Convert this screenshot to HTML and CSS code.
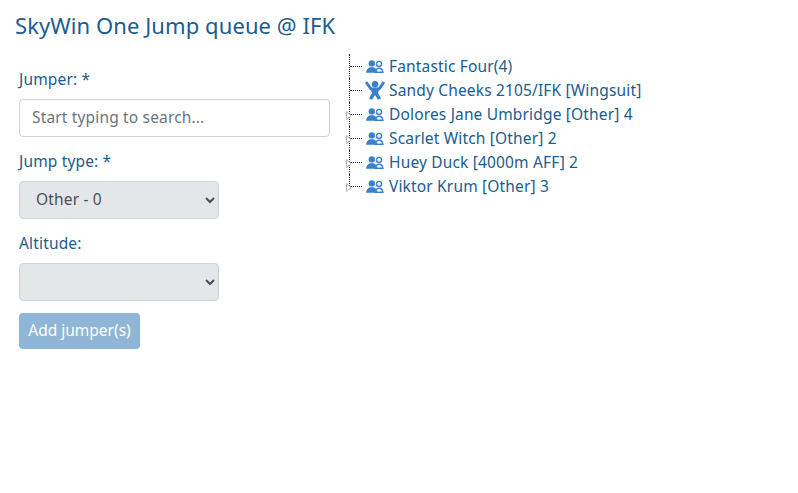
FILE: index.html
```html
<!DOCTYPE html>
<html lang="en">
<head>
<meta charset="utf-8">
<title>SkyWin One Jump queue</title>
<link rel="stylesheet" href="styles.css">
</head>
<body>
<svg class="defs" width="0" height="0" aria-hidden="true">
  <symbol id="group" viewBox="0 0 18 13">
    <circle cx="13" cy="3.900" r="2.500" fill="#fff" stroke="#3a80cc" stroke-width="1.400"/>
    <path d="M9.500 12.200c.3-2.600 1.500-3.900 3.500-3.900s3.500 1.300 3.900 3.900z" fill="#fff" stroke="#3a80cc" stroke-width="1.400"/>
    <circle cx="5.800" cy="3.400" r="3.200" fill="#3a80cc"/>
    <path d="M0 12.800c.2-3.600 2.600-5.600 5.800-5.600s5.300 2 5.600 5.600z" fill="#3a80cc"/>
  </symbol>
  <symbol id="solo" viewBox="0 0 20 20">
    <circle cx="10" cy="4.300" r="3.200" fill="#3a80cc"/>
    <path d="M1 2 5.800 8.800H14.200L19 2" fill="none" stroke="#3a80cc" stroke-width="2.800"/>
    <path d="M5.500 8H14.500L13 13 16 18.500 13 19.800 10 15 7 19.800 4 18.500 7 13z" fill="#3a80cc"/>
  </symbol>
  <symbol id="arrow" viewBox="0 0 6 9">
    <path d="M.5.500 5.300 4.500.5 8.500z" fill="#fff" stroke="#b4b4b4"/>
  </symbol>
</svg>
<h1 class="title">SkyWin One Jump queue @ IFK</h1>
<main class="layout">
  <form class="queue-form">
    <div class="field">
      <label class="label" for="jumper">Jumper: *</label>
      <input class="control" id="jumper" type="text" placeholder="Start typing to search...">
    </div>
    <div class="field">
      <label class="label" for="type">Jump type: *</label>
      <select class="picker" id="type"><option>Other - 0</option></select>
    </div>
    <div class="field">
      <label class="label" for="alt">Altitude:</label>
      <select class="picker" id="alt"><option></option></select>
    </div>
    <button class="submit" type="button" disabled>Add jumper(s)</button>
  </form>
  <ul class="tree">
    <li class="node"><svg class="icon"><use href="#group"/></svg>Fantastic Four(4)</li>
    <li class="node"><svg class="icon icon-solo"><use href="#solo"/></svg>Sandy Cheeks 2105/IFK [Wingsuit]</li>
    <li class="node"><svg class="toggle"><use href="#arrow"/></svg><svg class="icon"><use href="#group"/></svg>Dolores Jane Umbridge [Other] 4</li>
    <li class="node"><svg class="toggle"><use href="#arrow"/></svg><svg class="icon"><use href="#group"/></svg>Scarlet Witch [Other] 2</li>
    <li class="node"><svg class="toggle"><use href="#arrow"/></svg><svg class="icon"><use href="#group"/></svg>Huey Duck [4000m AFF] 2</li>
    <li class="node last"><svg class="toggle"><use href="#arrow"/></svg><svg class="icon"><use href="#group"/></svg>Viktor Krum [Other] 3</li>
  </ul>
</main>
</body>
</html>
```
FILE: styles.css
```css
* { box-sizing: border-box; }
html, body { margin: 0; }
body {
  height: 493px;
  background: #fff;
  color: #205c8e;
  font-family: "Noto Sans", "Liberation Sans", sans-serif;
  font-size: 15.500px;
  letter-spacing: .16px;
  line-height: 24px;
  overflow: hidden;
}
.defs { position: absolute; }
.title {
  margin: 0;
  padding: 11px 0 0 15px;
  font-size: 22px;
  font-weight: 400;
  letter-spacing: .08px;
  line-height: 28px;
}
.layout {
  display: flex;
  align-items: flex-start;
  padding: 15px 0 0 19px;
}
.queue-form { width: 311px; flex: none; padding-top: 13px; }
.field { margin-bottom: 12px; }
.label { display: block; margin-bottom: 8px; }
.control, .picker {
  display: block;
  height: 38px;
  border: 1px solid #ced4da;
  border-radius: 4px;
  font: inherit;
  letter-spacing: inherit;
  color: #495057;
}
.control { width: 100%; padding: 4px 12px 6px; background: #fff; }
.control::placeholder { color: #6c757d; opacity: 1; }
.picker { width: 200px; padding: 4px 12px 6px; background-color: #e4e7ea; }
.submit {
  display: block;
  height: 36px;
  width: 121px;
  padding: 0 0 2px;
  border: 0;
  border-radius: 4px;
  background: #8fb6d7;
  color: #fff;
  font: inherit;
  letter-spacing: 0;
}
.tree {
  list-style: none;
  margin: 0;
  padding: 0 0 0 19px;
}
.node {
  position: relative;
  display: flex;
  align-items: center;
  height: 24px;
  padding-left: 17px;
  white-space: nowrap;
}
.node::before {
  content: "";
  position: absolute;
  left: 0;
  top: 0;
  bottom: 0;
  border-left: 1px dotted #222;
}
.node::after {
  content: "";
  position: absolute;
  left: 1px;
  width: 12px;
  top: 12px;
  border-top: 1px dotted #222;
}
.node.last::before { bottom: 12px; }
.toggle {
  position: absolute;
  z-index: 1;
  left: -3px;
  top: 9px;
  width: 6px;
  height: 9px;
}
.icon { width: 18px; height: 13px; margin-right: 5px; flex: none; }
.icon-solo { width: 20px; height: 20px; margin: 0 4px 0 -1px; }
```
